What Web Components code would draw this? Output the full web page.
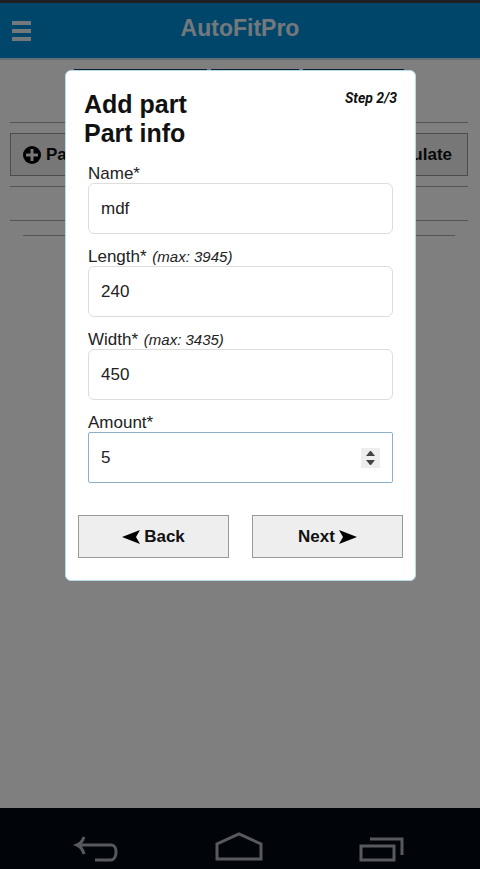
<!DOCTYPE html>
<html lang="en">
<head>
    <meta charset="UTF-8">
    <meta name="viewport" content="width=device-width, initial-scale=1.0">
    <title>AutoFitPro</title>
    <style>
        body {
            margin: 0;
            font-family: "Liberation Sans", Arial, sans-serif;
            font-size: 17px;
            color: #111;
            background-color: #fff;
        }
    </style>
</head>
<body>
    <app-shell>
        <app-header slot="header">AutoFitPro</app-header>
        <parts-page></parts-page>
        <system-bar slot="footer"></system-bar>
        <modal-dialog slot="modal" step="Step 2/3">
            <span slot="title">Add part</span>
            <span slot="subtitle">Part info</span>
            <form-field label="Name*" name="name" value="mdf"></form-field>
            <form-field label="Length*" name="length" type="number" value="240" hint="(max: 3945)"></form-field>
            <form-field label="Width*" name="width" type="number" value="450" hint="(max: 3435)"></form-field>
            <form-field label="Amount*" name="amount" type="number" value="5" active></form-field>
            <app-button slot="actions">
                <svg slot="before" width="18" height="16" viewBox="0 0 18 16"><path d="M0 8 18 1 14 8 18 15Z"/></svg>
                Back
            </app-button>
            <app-button slot="actions">
                Next
                <svg slot="after" width="18" height="16" viewBox="0 0 18 16"><path d="M18 8 0 1 4 8 0 15Z"/></svg>
            </app-button>
        </modal-dialog>
    </app-shell>

    <script>
        class AppShell extends HTMLElement {
            constructor(){
                super()
                this.shadowDOM = this.attachShadow({ mode: 'open'})
            }

            connectedCallback() {
                this.shadowDOM.innerHTML = `
                    <style>
                        :host {
                            display: flex;
                            flex-direction: column;
                            position: relative;
                            min-height: 100vh;
                        }
                        main {
                            flex: 1;
                        }
                        .overlay {
                            position: absolute;
                            inset: 0;
                            box-sizing: border-box;
                            padding: 70px 64px 0 65px;
                            background-color: rgba(0,0,0,.5);
                        }
                    </style>
                    <slot name="header"></slot>
                    <main><slot></slot></main>
                    <slot name="footer"></slot>
                    <div class="overlay"><slot name="modal"></slot></div>
                `
            }
        }

        class AppHeader extends HTMLElement {
            constructor(){
                super()
                this.shadowDOM = this.attachShadow({ mode: 'open'})
            }

            connectedCallback() {
                this.shadowDOM.innerHTML = `
                    <style>
                        :host {
                            display: block;
                            border-top: 3px solid #403c44;
                            border-bottom: 2px solid #c4dcec;
                        }
                        header {
                            display: grid;
                            grid-template-columns: 44px 1fr 44px;
                            align-items: center;
                            height: 55px;
                            background-color: #008cd6;
                        }
                        button {
                            display: flex;
                            padding: 0 0 0 12px;
                            border: 0;
                            background: none;
                        }
                        h1 {
                            margin: 0;
                            padding-bottom: 6px;
                            font-size: 23px;
                            line-height: 26px;
                            text-align: center;
                            color: #e4f0f8;
                        }
                    </style>
                    <header>
                        <button aria-label="Menu">
                            <svg width="20" height="20" viewBox="0 0 20 20" fill="#e4f0f8">
                                <path d="M0 0h19v4H0zM0 8h19v4H0zM0 16h19v4H0z"/>
                            </svg>
                        </button>
                        <h1><slot></slot></h1>
                    </header>
                `
            }
        }

        class AppButton extends HTMLElement {
            constructor(){
                super()
                this.shadowDOM = this.attachShadow({ mode: 'open'})
            }

            connectedCallback() {
                this.shadowDOM.innerHTML = `
                    <style>
                        :host {
                            display: block;
                        }
                        button {
                            display: flex;
                            align-items: center;
                            justify-content: center;
                            gap: var(--button-gap, 4px);
                            box-sizing: border-box;
                            width: 100%;
                            height: 43px;
                            padding: 0 var(--button-pad, 12px);
                            border: 1px solid #999;
                            background-color: #eee;
                            color: #111;
                            font: bold 17px "Liberation Sans", Arial, sans-serif;
                        }
                    </style>
                    <button type="button">
                        <slot name="before"></slot>
                        <span><slot></slot></span>
                        <slot name="after"></slot>
                    </button>
                `
            }
        }

        class PartsPage extends HTMLElement {
            constructor(){
                super()
                this.shadowDOM = this.attachShadow({ mode: 'open'})
            }

            connectedCallback() {
                this.shadowDOM.innerHTML = `
                    <style>
                        :host {
                            display: block;
                            padding: 9px 12px 0 10px;
                        }
                        .tabs {
                            display: grid;
                            grid-template-columns: 133fr 87fr 101fr;
                            gap: 4px;
                            height: 43px;
                            margin: 0 64px 10px;
                        }
                        .tabs div {
                            background-color: #20405c;
                        }
                        .toolbar {
                            display: flex;
                            justify-content: space-between;
                            padding: 10px 0;
                            border-top: 1px solid #aaa;
                            border-bottom: 1px solid #aaa;
                        }
                        .toolbar app-button {
                            --button-gap: 5px;
                        }
                        .toolbar app-button:last-child {
                            --button-pad: 15px;
                        }
                        .list {
                            height: 33px;
                            border-bottom: 1px solid #aaa;
                        }
                        hr {
                            margin: 14px 13px 0;
                            border: 0;
                            border-top: 1px solid #aaa;
                        }
                    </style>
                    <div class="tabs"><div></div><div></div><div></div></div>
                    <div class="toolbar">
                        <app-button>
                            <svg slot="before" width="18" height="18" viewBox="0 0 18 18">
                                <circle cx="9" cy="9" r="9"/>
                                <path d="M9 3v12M3 9h12" stroke="#eee" stroke-width="3"/>
                            </svg>
                            Part
                        </app-button>
                        <app-button>Calculate</app-button>
                    </div>
                    <div class="list"></div>
                    <hr>
                `
            }
        }

        class ModalDialog extends HTMLElement {
            constructor(){
                super()
                this.shadowDOM = this.attachShadow({ mode: 'open'})
            }

            connectedCallback() {
                this.shadowDOM.innerHTML = `
                    <style>
                        :host {
                            display: block;
                            padding: 19px 12px 22px;
                            border: 1px solid #b4dcec;
                            border-radius: 6px;
                            background-color: #fff;
                        }
                        .head {
                            display: flex;
                            justify-content: space-between;
                            padding: 0 6px;
                        }
                        h2 {
                            display: flex;
                            flex-direction: column;
                            margin: 0;
                            font-size: 25px;
                            line-height: 29px;
                        }
                        .step {
                            font-family: Roboto, "Liberation Sans", sans-serif;
                            font-size: 14px;
                            line-height: 16px;
                            font-weight: bold;
                            font-style: italic;
                        }
                        .fields {
                            display: grid;
                            gap: 12px;
                            padding: 15px 10px 32px;
                        }
                        .actions {
                            display: grid;
                            grid-template-columns: 1fr 1fr;
                            gap: 23px;
                        }
                    </style>
                    <div class="head">
                        <h2><slot name="title"></slot><slot name="subtitle"></slot></h2>
                        <span class="step">${this.getAttribute('step')}</span>
                    </div>
                    <div class="fields"><slot></slot></div>
                    <div class="actions"><slot name="actions"></slot></div>
                `
            }
        }

        class FormField extends HTMLElement {
            constructor(){
                super()
                this.shadowDOM = this.attachShadow({ mode: 'open'})
            }

            connectedCallback() {
                const name = this.getAttribute('name')
                const type = this.getAttribute('type') || 'text'
                const hint = this.getAttribute('hint')

                this.shadowDOM.innerHTML = `
                    <style>
                        :host {
                            display: block;
                        }
                        label {
                            display: block;
                            padding-top: 2px;
                            line-height: 18px;
                            color: #222;
                        }
                        em {
                            margin-left: 1px;
                            font-size: 15px;
                        }
                        input {
                            display: block;
                            box-sizing: border-box;
                            width: 100%;
                            height: 51px;
                            padding: 0 12px;
                            border: 1px solid #ddd;
                            border-radius: 6px;
                            outline: none;
                            background-color: #fff;
                            color: #222;
                            font: 17px "Liberation Sans", Arial, sans-serif;
                        }
                        input::-webkit-inner-spin-button {
                            appearance: none;
                            width: 19px;
                            height: 20px;
                            margin: 0;
                            opacity: 0;
                            background: #eee url('data:image/svg+xml,<svg xmlns="http://www.w3.org/2000/svg" viewBox="0 0 19 20" fill="%23444"><path d="M5 8 9 3h1l4 5zM5 12l4 5h1l4-5z"/></svg>');
                        }
                        :host([active]) input {
                            border-color: #8cb0cc;
                            border-radius: 2px;
                        }
                        :host([active]) input::-webkit-inner-spin-button {
                            opacity: 1;
                        }
                    </style>
                    <label for="${name}">${this.getAttribute('label')}${hint ? ` <em>${hint}</em>` : ''}</label>
                    <input id="${name}" name="${name}" type="${type}" value="${this.getAttribute('value')}">
                `
            }
        }

        class SystemBar extends HTMLElement {
            constructor(){
                super()
                this.shadowDOM = this.attachShadow({ mode: 'open'})
            }

            connectedCallback() {
                this.shadowDOM.innerHTML = `
                    <style>
                        :host {
                            display: flex;
                            justify-content: space-around;
                            padding: 24px 26px 6px 24px;
                            background-color: #020811;
                        }
                        button {
                            display: flex;
                            padding: 0;
                            border: 0;
                            background: none;
                        }
                        svg {
                            fill: none;
                            stroke: #b0b2bc;
                            stroke-width: 3;
                        }
                    </style>
                    <button aria-label="Back">
                        <svg width="48" height="31" viewBox="0 0 48 31">
                            <path d="M12 5Q10 11 5 13Q10 15 12 22M5 13h35c6 1 5 15-1 15H23"/>
                        </svg>
                    </button>
                    <button aria-label="Home">
                        <svg width="48" height="31" viewBox="0 0 48 31">
                            <path d="M2 27V12L24 2l22 10v15z"/>
                        </svg>
                    </button>
                    <button aria-label="Recent apps">
                        <svg width="48" height="31" viewBox="0 0 48 31">
                            <path d="M3 14h33v14H3zM12 7h32v16"/>
                        </svg>
                    </button>
                `
            }
        }

        customElements.define('app-shell', AppShell)
        customElements.define('app-header', AppHeader)
        customElements.define('app-button', AppButton)
        customElements.define('parts-page', PartsPage)
        customElements.define('modal-dialog', ModalDialog)
        customElements.define('form-field', FormField)
        customElements.define('system-bar', SystemBar)
    </script>
</body>
</html>
